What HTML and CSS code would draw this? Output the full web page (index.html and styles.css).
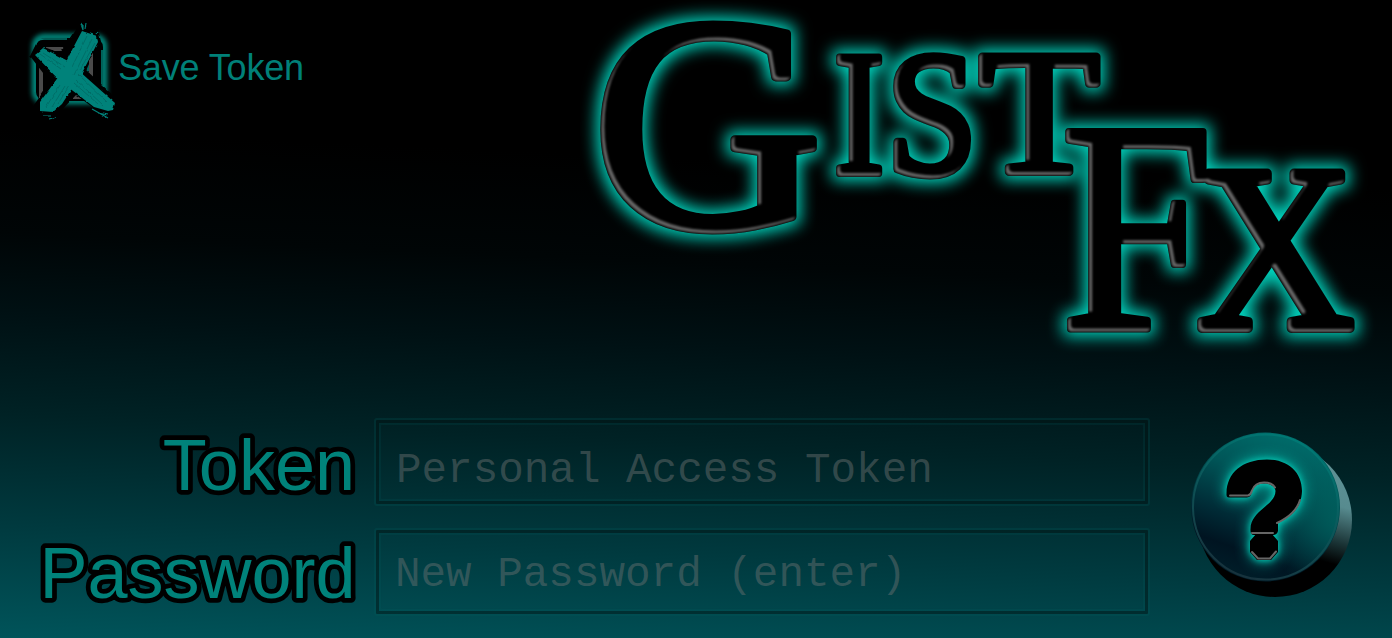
FILE: index.html
```html
<!DOCTYPE html>
<html lang="en">
<head>
<meta charset="utf-8">
<title>GistFx</title>
<link rel="stylesheet" href="styles.css">
</head>
<body>
<main class="login">
  <header class="top">
    <label class="save">
      <svg class="save-icon" width="96" height="104" viewBox="24 18 96 104" aria-hidden="true">
        <defs>
          <filter id="soft" x="-30%" y="-30%" width="160%" height="160%"><feGaussianBlur stdDeviation="2.4"/></filter>
          <filter id="rough" x="-20%" y="-20%" width="140%" height="140%" color-interpolation-filters="sRGB">
            <feTurbulence type="fractalNoise" baseFrequency="0.2" numOctaves="1" seed="4"/>
            <feDisplacementMap in="SourceGraphic" scale="3" xChannelSelector="R" yChannelSelector="G"/>
            <feGaussianBlur stdDeviation=".4"/>
          </filter>
        </defs>
        <rect x="35" y="37" width="69" height="64" rx="9" fill="none" stroke="#009487" stroke-width="6" filter="url(#soft)"/>
        <rect x="38" y="40" width="63" height="59" rx="7" fill="#000" stroke="#000" stroke-width="4"/>
        <path d="M35 92V48q0-9 9-9h23M102 50v43" fill="none" stroke="#007a70" stroke-width="1.6"/>
        <rect x="41" y="49" width="50" height="48" fill="none" stroke="#4a4a4a" stroke-width="4"/>
        <rect x="44" y="52" width="44" height="42" fill="#000"/>
        <path d="M89 64v18l-5-7z" fill="#00665f"/>
        <g filter="url(#rough)">
          <path d="M78 27L98 28L101 42L84 68L117 99L115 115L102 114L76 95L57 115L39 116L34 105L50 82L30 56L36 44L60 53Z" fill="#000"/>
          <g fill="#00827a">
            <path d="M82 31L97 36L98 42L82 73L62 104L53 112L40 111L40 102L59 76L73 48Z"/>
            <path d="M35 55L43 48L68 61L88 79L115 103L113 110L108 111L94 107L60 81Z"/>
          </g>
          <path d="M81 24l2 6M86 23l-1 6M43 116l8 0M49 119l8-2M92 109l16 9M98 113l10 2M83 30v-5M96 34l2-3" stroke="#00827a" stroke-width="1.1"/>
          <g fill="none" stroke="#006660" stroke-width=".7">
            <path d="M87 36L72 67M92 39L74 75M95 43L80 70M60 85L46 107M65 86L52 107M69 86L58 104"/>
            <path d="M40 54L61 69M43 53L65 67M78 74L107 102M76 80L103 105M74 83L98 104"/>
          </g>
        </g>
      </svg>
      <span class="save-text">Save Token</span>
    </label>
    <svg class="logo" width="812" height="370" viewBox="580 0 812 370" role="img" aria-label="GistFx">
      <defs>
        <filter id="bevel" filterUnits="userSpaceOnUse" x="570" y="-20" width="822" height="400" color-interpolation-filters="sRGB">
          <feMorphology in="SourceAlpha" operator="dilate" radius="4" result="fat"/>
          <feGaussianBlur in="fat" stdDeviation="8" result="wide"/>
          <feFlood flood-color="#00d4be"/>
          <feComposite in2="wide" operator="in" result="glow"/>
          <feMorphology in="SourceAlpha" operator="erode" radius="1" result="thin"/>
          <feOffset in="thin" dx="3" dy="-3" result="moved"/>
          <feComposite in="thin" in2="moved" operator="out" result="edge"/>
          <feGaussianBlur in="edge" stdDeviation=".8" result="edgeSoft"/>
          <feFlood flood-color="#666"/>
          <feComposite in2="edgeSoft" operator="in" result="lit"/>
          <feComposite in="lit" in2="SourceAlpha" operator="in" result="light"/>
          <feMerge>
            <feMergeNode in="glow"/>
            <feMergeNode in="SourceGraphic"/><feMergeNode in="light"/>
          </feMerge>
        </filter>
      </defs>
      <g class="logo-letters">
        <g filter="url(#bevel)">
          <text transform="translate(592 227) scale(1.055 1.01)" font-size="302" stroke-width="9">G</text>
          <text transform="translate(834 173) scale(.85 1)" font-size="177">I</text>
          <text transform="translate(886.500 172.500) scale(.93 1)" font-size="175" stroke-width="9">S</text>
          <text transform="translate(979 172) scale(1.12 1)" font-size="176">T</text>
          <text transform="translate(1061 328.500) scale(.91 1)" font-size="300">F</text>
          <text transform="translate(1197 328) scale(.925 1)" font-size="235" stroke-width="10">X</text>
        </g>
      </g>
    </svg>
  </header>
  <section class="form">
    <div class="fields">
      <label class="label" for="token"><svg width="355" height="88"><text x="355" y="72">Token</text></svg></label>
      <input class="field" id="token" type="text" placeholder="Personal Access Token">
      <label class="label" for="password"><svg width="355" height="88"><text x="355.500" y="70">Password</text></svg></label>
      <input class="field field-password" id="password" type="text" placeholder="New Password (enter)">
    </div>
    <button class="help" type="button" aria-label="Help">
      <svg width="172" height="176" viewBox="1186 428 172 176" aria-hidden="true">
        <defs>
          <linearGradient id="side" x1=".85" y1=".1" x2=".6" y2="1">
            <stop offset="0" stop-color="#5f9296"/><stop offset=".3" stop-color="#578b8f"/>
            <stop offset=".55" stop-color="#1a3335"/><stop offset=".7" stop-color="#000"/>
          </linearGradient>
          <linearGradient id="face" x1=".65" y1="0" x2=".3" y2="1">
            <stop offset="0" stop-color="#006d6b"/><stop offset=".3" stop-color="#005658"/>
            <stop offset=".62" stop-color="#002a35"/><stop offset=".8" stop-color="#001421"/><stop offset="1" stop-color="#00202b"/>
          </linearGradient>
          <linearGradient id="rim" x1=".7" y1="0" x2=".3" y2="1">
            <stop offset="0" stop-color="#007b76"/><stop offset="1" stop-color="#18303b"/>
          </linearGradient>
          <radialGradient id="shine" cx="1" cy=".6" r=".5">
            <stop offset="0" stop-color="#00625f" stop-opacity=".8"/><stop offset="1" stop-color="#00625f" stop-opacity="0"/>
          </radialGradient>
        </defs>
        <circle cx="1275" cy="520" r="77" fill="url(#side)"/>
        <circle cx="1265.500" cy="507" r="74.500" fill="url(#face)"/>
        <circle cx="1265.500" cy="507" r="74" fill="url(#shine)"/>
        <circle cx="1265.500" cy="507" r="72.500" fill="none" stroke="url(#rim)" stroke-width="2"/>
        <g class="mark">
          <path d="M1229 497.500Q1226 497.500 1226.500 493C1227 473 1242 459.500 1267 459.500C1289 459.500 1302 473 1302 491C1301.500 508 1291 517 1278 523V531Q1277 535 1273 535H1254Q1250 535 1250.500 529C1251 510 1275 506 1275.500 491C1275 481 1253 481 1252 491Q1251 497.500 1247 497.500Z"/>
          <path d="M1256 534h16l6 7v11l-7 8h-14l-7-8v-11z"/>
          <path class="mark-light" d="M1230 495.500h18q3-1 4-5q3-8 12-8q8 0 11 5M1300 500q-4 14-23 23M1252 533h21M1252 552l6 6.500h12l6-7"/>
        </g>
      </svg>
    </button>
  </section>
</main>
</body>
</html>
```
FILE: styles.css
```css
* { box-sizing: border-box; }

body {
  margin: 0;
  background: #000;
  font-family: "Liberation Sans", Arial, sans-serif;
}

.login {
  width: 1392px;
  height: 638px;
  overflow: hidden;
  display: flex;
  flex-direction: column;
  background: linear-gradient(182.5deg, #000 0, #000 27%, #000506 42%, #001114 54%, #002225 68%, #003a3f 84%, #00545a 100%);
}

.top {
  display: flex;
  justify-content: space-between;
  align-items: flex-start;
  height: 418px;
}

.save {
  display: flex;
  align-items: flex-start;
  padding: 18px 0 0 24px;
}

.save-icon { display: block; }

.save-text {
  margin: 29px 0 0 -2px;
  font-size: 36px;
  line-height: 42px;
  letter-spacing: -0.15px;
  color: #008078;
}

.logo { display: block; }

.logo-letters {
  font-family: "Liberation Serif", "Times New Roman", serif;
  fill: #000;
  stroke: #000;
  stroke-width: 8px;
  stroke-linejoin: round;
}

.form {
  display: flex;
  align-items: flex-start;
}

.fields {
  display: grid;
  grid-template-columns: 355px 776px;
  grid-template-rows: 88px 88px;
  column-gap: 19px;
  row-gap: 22px;
}

.label svg {
  display: block;
  overflow: visible;
}

.label text {
  font-size: 72px;
  text-anchor: end;
  fill: #00827a;
  stroke: #000;
  stroke-width: 9.5px;
  stroke-linejoin: round;
  paint-order: stroke fill;
}

.field {
  width: 776px;
  height: 88px;
  margin: 0;
  padding: 17px 18px 0 20px;
  border: 2px solid rgba(0, 90, 90, .24);
  border-radius: 3px;
  background: transparent;
  box-shadow: inset 0 0 0 3px rgba(0, 0, 0, .38), inset 0 0 1px 5px rgba(0, 100, 100, .17);
  font-family: "Courier New", "Liberation Mono", monospace;
  font-size: 42.6px;
  color: #5c8080;
  outline: none;
}

.field-password { padding: 6px 18px 0 19px; }

.field::placeholder { color: rgba(112, 116, 116, .45); opacity: 1; }

.help {
  margin: 10px 0 0 36px;
  padding: 0;
  border: 0;
  background: none;
}

.help svg { display: block; }

.mark {
  fill: #000;
  filter: drop-shadow(0 0 3px #00cdb9) drop-shadow(0 0 7px #00b9a8);
}

.mark-light {
  fill: none;
  stroke: #666;
  stroke-width: 2;
  stroke-linecap: round;
}
```
